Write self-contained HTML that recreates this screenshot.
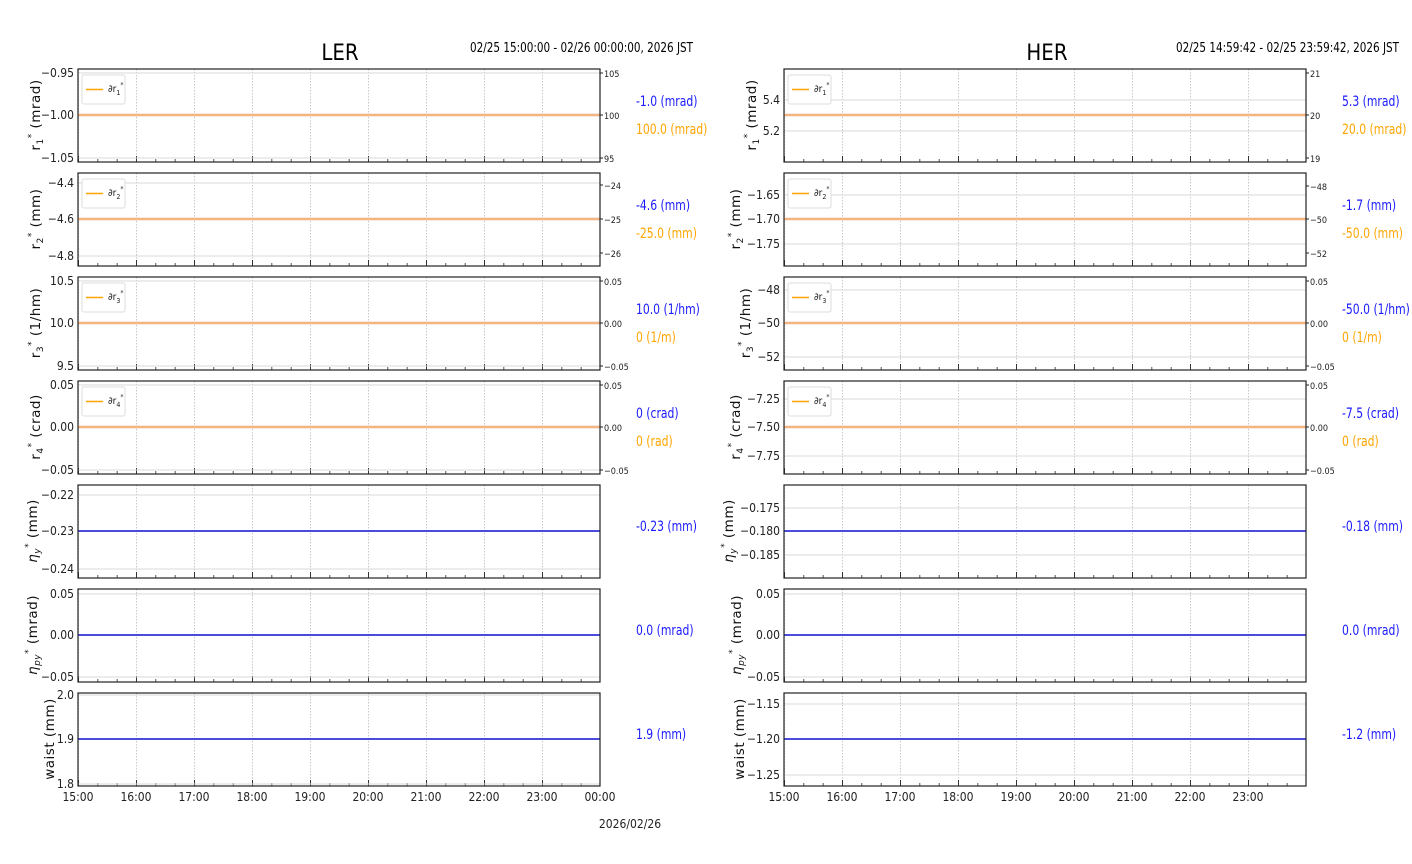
<!DOCTYPE html>
<html><head><meta charset="utf-8"><style>
html,body{margin:0;padding:0;background:#fff;}
svg{display:block;}
text{font-family:"Liberation Sans Narrow","DejaVu Sans Condensed","Liberation Sans",sans-serif;}
.t{font-size:12px;fill:#222;text-anchor:end;}
.r{font-size:9px;fill:#222;}
.yl{font-family:"DejaVu Sans","Liberation Sans",sans-serif;font-size:13.5px;fill:#111;text-anchor:middle;letter-spacing:0.5px;}
.b{font-size:14px;fill:#1a1aff;}
.o{font-size:14px;fill:#ffa500;}
.x{font-size:12px;fill:#222;text-anchor:middle;}
.hg{stroke:#d8d8d8;stroke-width:1;}
.fr{fill:none;stroke:#222;stroke-width:1.2;}
</style></head><body>
<svg width="1412" height="864" viewBox="0 0 1412 864" xmlns="http://www.w3.org/2000/svg">
<defs>
<pattern id="gL" patternUnits="userSpaceOnUse" x="78" y="69" width="58" height="104">
<line x1="0.5" y1="0" x2="0.5" y2="93" stroke="#c8c8c8" stroke-dasharray="1.5,1.5"/>
<line x1="0.5" y1="87" x2="0.5" y2="93" stroke="#333"/>
<line x1="19.8" y1="90" x2="19.8" y2="93" stroke="#555"/>
<line x1="39.2" y1="90" x2="39.2" y2="93" stroke="#555"/>
</pattern>
<pattern id="gR" patternUnits="userSpaceOnUse" x="784" y="69" width="58" height="104">
<line x1="0.5" y1="0" x2="0.5" y2="93" stroke="#c8c8c8" stroke-dasharray="1.5,1.5"/>
<line x1="0.5" y1="87" x2="0.5" y2="93" stroke="#333"/>
<line x1="19.8" y1="90" x2="19.8" y2="93" stroke="#555"/>
<line x1="39.2" y1="90" x2="39.2" y2="93" stroke="#555"/>
</pattern>
<g id="leg"><rect x="0" y="0" width="43" height="29" rx="2" fill="#fff" stroke="#ddd"/><line x1="4" y1="14.5" x2="21" y2="14.5" stroke="#ffa500" stroke-width="1.5"/></g>
</defs>

<text x="340" y="60" style="font-size:22px;fill:#000;text-anchor:middle">LER</text>
<text x="470" y="52" style="font-size:13px;fill:#000" textLength="223" lengthAdjust="spacingAndGlyphs">02/25 15:00:00 - 02/26 00:00:00, 2026 JST</text>
<text x="1047" y="60" style="font-size:22px;fill:#000;text-anchor:middle">HER</text>
<text x="1176" y="52" style="font-size:13px;fill:#000" textLength="223" lengthAdjust="spacingAndGlyphs">02/25 14:59:42 - 02/25 23:59:42, 2026 JST</text>

<!-- LEFT PANELS -->
<rect x="78" y="69" width="522" height="717" fill="url(#gL)"/>
<rect x="78" y="162" width="522" height="11" fill="#fff"/><rect x="78" y="266" width="522" height="11" fill="#fff"/><rect x="78" y="370" width="522" height="11" fill="#fff"/><rect x="78" y="474" width="522" height="11" fill="#fff"/><rect x="78" y="578" width="522" height="11" fill="#fff"/><rect x="78" y="682" width="522" height="11" fill="#fff"/>
<g class="hg">
<line x1="78" y1="73" x2="600" y2="73"/><line x1="78" y1="115" x2="600" y2="115"/><line x1="78" y1="158" x2="600" y2="158"/>
<line x1="78" y1="183" x2="600" y2="183"/><line x1="78" y1="219" x2="600" y2="219"/><line x1="78" y1="256" x2="600" y2="256"/>
<line x1="78" y1="281" x2="600" y2="281"/><line x1="78" y1="323" x2="600" y2="323"/><line x1="78" y1="366" x2="600" y2="366"/>
<line x1="78" y1="385" x2="600" y2="385"/><line x1="78" y1="427" x2="600" y2="427"/><line x1="78" y1="470" x2="600" y2="470"/>
<line x1="78" y1="495" x2="600" y2="495"/><line x1="78" y1="569" x2="600" y2="569"/>
<line x1="78" y1="594" x2="600" y2="594"/><line x1="78" y1="677" x2="600" y2="677"/>
<line x1="78" y1="695" x2="600" y2="695"/><line x1="78" y1="784" x2="600" y2="784"/>
</g>
<g>
<line x1="78" y1="115" x2="600" y2="115" stroke="#f6cdc8" stroke-width="3"/><line x1="78" y1="115" x2="600" y2="115" stroke="#f0a030" stroke-width="1"/>
<line x1="78" y1="219" x2="600" y2="219" stroke="#f6cdc8" stroke-width="3"/><line x1="78" y1="219" x2="600" y2="219" stroke="#f0a030" stroke-width="1"/>
<line x1="78" y1="323" x2="600" y2="323" stroke="#f6cdc8" stroke-width="3"/><line x1="78" y1="323" x2="600" y2="323" stroke="#f0a030" stroke-width="1"/>
<line x1="78" y1="427" x2="600" y2="427" stroke="#f6cdc8" stroke-width="3"/><line x1="78" y1="427" x2="600" y2="427" stroke="#f0a030" stroke-width="1"/>
<line x1="78" y1="531" x2="600" y2="531" stroke="#1010d0" stroke-width="1.6"/>
<line x1="78" y1="635" x2="600" y2="635" stroke="#1010d0" stroke-width="1.6"/>
<line x1="78" y1="739" x2="600" y2="739" stroke="#1010d0" stroke-width="1.6"/>
</g>
<g>
<rect class="fr" x="78" y="69" width="522" height="93"/><rect class="fr" x="78" y="173" width="522" height="93"/><rect class="fr" x="78" y="277" width="522" height="93"/><rect class="fr" x="78" y="381" width="522" height="93"/><rect class="fr" x="78" y="485" width="522" height="93"/><rect class="fr" x="78" y="589" width="522" height="93"/><rect class="fr" x="78" y="693" width="522" height="93"/>
</g>
<use href="#leg" x="82" y="75"/><text x="108" y="92" style="font-size:10px;fill:#222">∂r<tspan font-size="7" dy="3">1</tspan><tspan font-size="7" dy="-8">*</tspan></text>
<use href="#leg" x="82" y="179"/><text x="108" y="196" style="font-size:10px;fill:#222">∂r<tspan font-size="7" dy="3">2</tspan><tspan font-size="7" dy="-8">*</tspan></text>
<use href="#leg" x="82" y="283"/><text x="108" y="300" style="font-size:10px;fill:#222">∂r<tspan font-size="7" dy="3">3</tspan><tspan font-size="7" dy="-8">*</tspan></text>
<use href="#leg" x="82" y="387"/><text x="108" y="404" style="font-size:10px;fill:#222">∂r<tspan font-size="7" dy="3">4</tspan><tspan font-size="7" dy="-8">*</tspan></text>
<g class="t">
<text x="74" y="77">−0.95</text><text x="74" y="119">−1.00</text><text x="74" y="162">−1.05</text>
<text x="74" y="187">−4.4</text><text x="74" y="223">−4.6</text><text x="74" y="260">−4.8</text>
<text x="74" y="285">10.5</text><text x="74" y="327">10.0</text><text x="74" y="370">9.5</text>
<text x="74" y="389">0.05</text><text x="74" y="431">0.00</text><text x="74" y="474">−0.05</text>
<text x="74" y="499">−0.22</text><text x="74" y="535">−0.23</text><text x="74" y="573">−0.24</text>
<text x="74" y="598">0.05</text><text x="74" y="639">0.00</text><text x="74" y="681">−0.05</text>
<text x="74" y="699">2.0</text><text x="74" y="743">1.9</text><text x="74" y="788">1.8</text>
</g>
<g stroke="#222">
<line x1="600" y1="73" x2="603" y2="73"/><line x1="600" y1="115" x2="603" y2="115"/><line x1="600" y1="158" x2="603" y2="158"/>
<line x1="600" y1="185" x2="603" y2="185"/><line x1="600" y1="219" x2="603" y2="219"/><line x1="600" y1="253" x2="603" y2="253"/>
<line x1="600" y1="281" x2="603" y2="281"/><line x1="600" y1="323" x2="603" y2="323"/><line x1="600" y1="366" x2="603" y2="366"/>
<line x1="600" y1="385" x2="603" y2="385"/><line x1="600" y1="427" x2="603" y2="427"/><line x1="600" y1="470" x2="603" y2="470"/>
</g>
<g class="r">
<text x="604" y="77">105</text><text x="604" y="119">100</text><text x="604" y="162">95</text>
<text x="604" y="189">−24</text><text x="604" y="223">−25</text><text x="604" y="257">−26</text>
<text x="604" y="285">0.05</text><text x="604" y="327">0.00</text><text x="604" y="370">−0.05</text>
<text x="604" y="389">0.05</text><text x="604" y="431">0.00</text><text x="604" y="474">−0.05</text>
</g>
<text class="yl" transform="translate(40,115) rotate(-90)">r<tspan font-size="9" dy="3">1</tspan><tspan font-size="9" dy="-9">*</tspan><tspan dy="6"> (mrad)</tspan></text>
<text class="yl" transform="translate(40,219) rotate(-90)">r<tspan font-size="9" dy="3">2</tspan><tspan font-size="9" dy="-9">*</tspan><tspan dy="6"> (mm)</tspan></text>
<text class="yl" transform="translate(40,323) rotate(-90)">r<tspan font-size="9" dy="3">3</tspan><tspan font-size="9" dy="-9">*</tspan><tspan dy="6"> (1/hm)</tspan></text>
<text class="yl" transform="translate(40,427) rotate(-90)">r<tspan font-size="9" dy="3">4</tspan><tspan font-size="9" dy="-9">*</tspan><tspan dy="6"> (crad)</tspan></text>
<text class="yl" transform="translate(37,531) rotate(-90)"><tspan font-style="italic">η</tspan><tspan font-size="9" font-style="italic" dy="3">y</tspan><tspan font-size="9" dy="-9">*</tspan><tspan dy="6"> (mm)</tspan></text>
<text class="yl" transform="translate(37,635) rotate(-90)"><tspan font-style="italic">η</tspan><tspan font-size="9" font-style="italic" dy="3">py</tspan><tspan font-size="9" dy="-9">*</tspan><tspan dy="6"> (mrad)</tspan></text>
<text class="yl" transform="translate(54,739) rotate(-90)">waist (mm)</text>
<g transform="scale(0.86,1)">
<text class="b" x="739.5" y="106">-1.0 (mrad)</text><text class="o" x="739.5" y="134">100.0 (mrad)</text>
<text class="b" x="739.5" y="210">-4.6 (mm)</text><text class="o" x="739.5" y="238">-25.0 (mm)</text>
<text class="b" x="739.5" y="314">10.0 (1/hm)</text><text class="o" x="739.5" y="342">0 (1/m)</text>
<text class="b" x="739.5" y="418">0 (crad)</text><text class="o" x="739.5" y="446">0 (rad)</text>
<text class="b" x="739.5" y="531">-0.23 (mm)</text>
<text class="b" x="739.5" y="635">0.0 (mrad)</text>
<text class="b" x="739.5" y="739">1.9 (mm)</text>
<text class="b" x="1560.5" y="106">5.3 (mrad)</text><text class="o" x="1560.5" y="134">20.0 (mrad)</text>
<text class="b" x="1560.5" y="210">-1.7 (mm)</text><text class="o" x="1560.5" y="238">-50.0 (mm)</text>
<text class="b" x="1560.5" y="314">-50.0 (1/hm)</text><text class="o" x="1560.5" y="342">0 (1/m)</text>
<text class="b" x="1560.5" y="418">-7.5 (crad)</text><text class="o" x="1560.5" y="446">0 (rad)</text>
<text class="b" x="1560.5" y="531">-0.18 (mm)</text>
<text class="b" x="1560.5" y="635">0.0 (mrad)</text>
<text class="b" x="1560.5" y="739">-1.2 (mm)</text>
</g>
<g class="x">
<text x="78" y="801">15:00</text><text x="136" y="801">16:00</text><text x="194" y="801">17:00</text><text x="252" y="801">18:00</text><text x="310" y="801">19:00</text><text x="368" y="801">20:00</text><text x="426" y="801">21:00</text><text x="484" y="801">22:00</text><text x="542" y="801">23:00</text><text x="600" y="801">00:00</text>
<text x="630" y="828">2026/02/26</text>
</g>

<!-- RIGHT PANELS -->
<rect x="784" y="69" width="522" height="717" fill="url(#gR)"/>
<rect x="784" y="162" width="522" height="11" fill="#fff"/><rect x="784" y="266" width="522" height="11" fill="#fff"/><rect x="784" y="370" width="522" height="11" fill="#fff"/><rect x="784" y="474" width="522" height="11" fill="#fff"/><rect x="784" y="578" width="522" height="11" fill="#fff"/><rect x="784" y="682" width="522" height="11" fill="#fff"/>
<g class="hg">
<line x1="784" y1="100" x2="1306" y2="100"/><line x1="784" y1="131" x2="1306" y2="131"/>
<line x1="784" y1="195" x2="1306" y2="195"/><line x1="784" y1="219" x2="1306" y2="219"/><line x1="784" y1="244" x2="1306" y2="244"/>
<line x1="784" y1="290" x2="1306" y2="290"/><line x1="784" y1="357" x2="1306" y2="357"/>
<line x1="784" y1="399" x2="1306" y2="399"/><line x1="784" y1="456" x2="1306" y2="456"/>
<line x1="784" y1="508" x2="1306" y2="508"/><line x1="784" y1="555" x2="1306" y2="555"/>
<line x1="784" y1="594" x2="1306" y2="594"/><line x1="784" y1="677" x2="1306" y2="677"/>
<line x1="784" y1="704" x2="1306" y2="704"/><line x1="784" y1="775" x2="1306" y2="775"/>
</g>
<g>
<line x1="784" y1="115" x2="1306" y2="115" stroke="#f6cdc8" stroke-width="3"/><line x1="784" y1="115" x2="1306" y2="115" stroke="#f0a030" stroke-width="1"/>
<line x1="784" y1="219" x2="1306" y2="219" stroke="#f6cdc8" stroke-width="3"/><line x1="784" y1="219" x2="1306" y2="219" stroke="#f0a030" stroke-width="1"/>
<line x1="784" y1="323" x2="1306" y2="323" stroke="#f6cdc8" stroke-width="3"/><line x1="784" y1="323" x2="1306" y2="323" stroke="#f0a030" stroke-width="1"/>
<line x1="784" y1="427" x2="1306" y2="427" stroke="#f6cdc8" stroke-width="3"/><line x1="784" y1="427" x2="1306" y2="427" stroke="#f0a030" stroke-width="1"/>
<line x1="784" y1="531" x2="1306" y2="531" stroke="#1010d0" stroke-width="1.6"/>
<line x1="784" y1="635" x2="1306" y2="635" stroke="#1010d0" stroke-width="1.6"/>
<line x1="784" y1="739" x2="1306" y2="739" stroke="#1010d0" stroke-width="1.6"/>
</g>
<g>
<rect class="fr" x="784" y="69" width="522" height="93"/><rect class="fr" x="784" y="173" width="522" height="93"/><rect class="fr" x="784" y="277" width="522" height="93"/><rect class="fr" x="784" y="381" width="522" height="93"/><rect class="fr" x="784" y="485" width="522" height="93"/><rect class="fr" x="784" y="589" width="522" height="93"/><rect class="fr" x="784" y="693" width="522" height="93"/>
</g>
<use href="#leg" x="788" y="75"/><text x="814" y="92" style="font-size:10px;fill:#222">∂r<tspan font-size="7" dy="3">1</tspan><tspan font-size="7" dy="-8">*</tspan></text>
<use href="#leg" x="788" y="179"/><text x="814" y="196" style="font-size:10px;fill:#222">∂r<tspan font-size="7" dy="3">2</tspan><tspan font-size="7" dy="-8">*</tspan></text>
<use href="#leg" x="788" y="283"/><text x="814" y="300" style="font-size:10px;fill:#222">∂r<tspan font-size="7" dy="3">3</tspan><tspan font-size="7" dy="-8">*</tspan></text>
<use href="#leg" x="788" y="387"/><text x="814" y="404" style="font-size:10px;fill:#222">∂r<tspan font-size="7" dy="3">4</tspan><tspan font-size="7" dy="-8">*</tspan></text>
<g class="t">
<text x="780" y="104">5.4</text><text x="780" y="135">5.2</text>
<text x="780" y="199">−1.65</text><text x="780" y="223">−1.70</text><text x="780" y="248">−1.75</text>
<text x="780" y="294">−48</text><text x="780" y="327">−50</text><text x="780" y="361">−52</text>
<text x="780" y="403">−7.25</text><text x="780" y="431">−7.50</text><text x="780" y="460">−7.75</text>
<text x="780" y="512">−0.175</text><text x="780" y="535">−0.180</text><text x="780" y="559">−0.185</text>
<text x="780" y="598">0.05</text><text x="780" y="639">0.00</text><text x="780" y="681">−0.05</text>
<text x="780" y="708">−1.15</text><text x="780" y="743">−1.20</text><text x="780" y="779">−1.25</text>
</g>
<g stroke="#222">
<line x1="1306" y1="73" x2="1309" y2="73"/><line x1="1306" y1="115" x2="1309" y2="115"/><line x1="1306" y1="158" x2="1309" y2="158"/>
<line x1="1306" y1="186" x2="1309" y2="186"/><line x1="1306" y1="219" x2="1309" y2="219"/><line x1="1306" y1="253" x2="1309" y2="253"/>
<line x1="1306" y1="281" x2="1309" y2="281"/><line x1="1306" y1="323" x2="1309" y2="323"/><line x1="1306" y1="366" x2="1309" y2="366"/>
<line x1="1306" y1="385" x2="1309" y2="385"/><line x1="1306" y1="427" x2="1309" y2="427"/><line x1="1306" y1="470" x2="1309" y2="470"/>
</g>
<g class="r">
<text x="1310" y="77">21</text><text x="1310" y="119">20</text><text x="1310" y="162">19</text>
<text x="1310" y="190">−48</text><text x="1310" y="223">−50</text><text x="1310" y="257">−52</text>
<text x="1310" y="285">0.05</text><text x="1310" y="327">0.00</text><text x="1310" y="370">−0.05</text>
<text x="1310" y="389">0.05</text><text x="1310" y="431">0.00</text><text x="1310" y="474">−0.05</text>
</g>
<text class="yl" transform="translate(756,115) rotate(-90)">r<tspan font-size="9" dy="3">1</tspan><tspan font-size="9" dy="-9">*</tspan><tspan dy="6"> (mrad)</tspan></text>
<text class="yl" transform="translate(740,219) rotate(-90)">r<tspan font-size="9" dy="3">2</tspan><tspan font-size="9" dy="-9">*</tspan><tspan dy="6"> (mm)</tspan></text>
<text class="yl" transform="translate(750,323) rotate(-90)">r<tspan font-size="9" dy="3">3</tspan><tspan font-size="9" dy="-9">*</tspan><tspan dy="6"> (1/hm)</tspan></text>
<text class="yl" transform="translate(740,427) rotate(-90)">r<tspan font-size="9" dy="3">4</tspan><tspan font-size="9" dy="-9">*</tspan><tspan dy="6"> (crad)</tspan></text>
<text class="yl" transform="translate(733,531) rotate(-90)"><tspan font-style="italic">η</tspan><tspan font-size="9" font-style="italic" dy="3">y</tspan><tspan font-size="9" dy="-9">*</tspan><tspan dy="6"> (mm)</tspan></text>
<text class="yl" transform="translate(741,635) rotate(-90)"><tspan font-style="italic">η</tspan><tspan font-size="9" font-style="italic" dy="3">py</tspan><tspan font-size="9" dy="-9">*</tspan><tspan dy="6"> (mrad)</tspan></text>
<text class="yl" transform="translate(744,739) rotate(-90)">waist (mm)</text>
<g class="x">
<text x="784" y="801">15:00</text><text x="842" y="801">16:00</text><text x="900" y="801">17:00</text><text x="958" y="801">18:00</text><text x="1016" y="801">19:00</text><text x="1074" y="801">20:00</text><text x="1132" y="801">21:00</text><text x="1190" y="801">22:00</text><text x="1248" y="801">23:00</text>
</g>
</svg>
</body></html>
